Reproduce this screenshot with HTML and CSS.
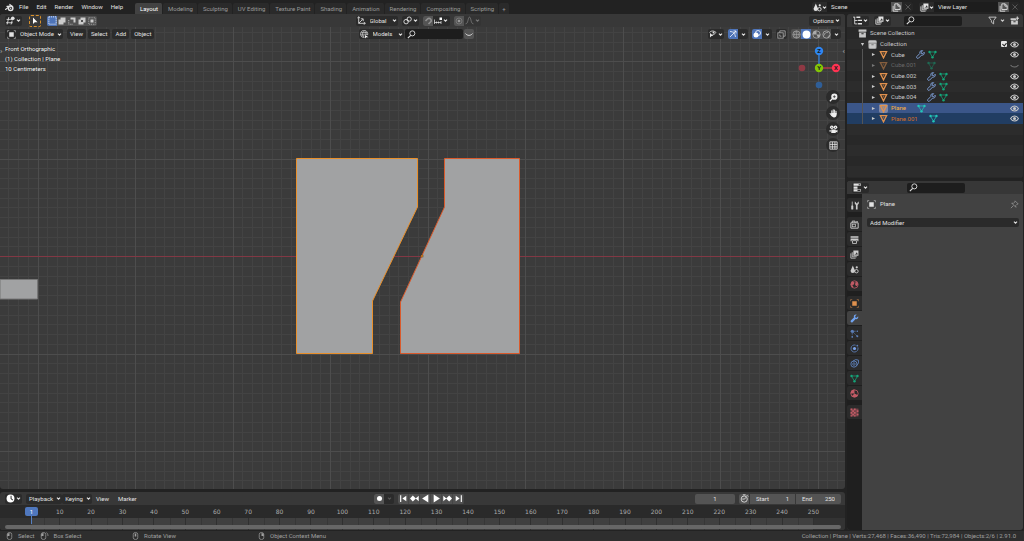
FILE: index.html
```html
<!DOCTYPE html>
<html lang="en">
<head>
<meta charset="utf-8">
<title>Blender</title>
<link rel="stylesheet" href="styles.css">
</head>
<body>
<svg class="sprite" aria-hidden="true">
  <symbol id="chev" viewBox="0 0 8 8"><path d="M1.500 2.500 4 5 6.500 2.500" fill="none" stroke="currentColor" stroke-width="1.700"/></symbol>
  <symbol id="blender" viewBox="0 0 16 16"><path d="M1 11.500 8 6H3.500M8.500 2.500l5 4" fill="none" stroke="currentColor" stroke-width="2" stroke-linecap="round"/><circle cx="10" cy="9.500" r="4" fill="none" stroke="currentColor" stroke-width="2.600"/><circle cx="10" cy="9.500" r="1.300" fill="currentColor"/></symbol>
  <symbol id="search" viewBox="0 0 16 16"><circle cx="9.500" cy="6" r="4.500" fill="none" stroke="currentColor" stroke-width="1.600"/><path d="M6.500 9.500 1.500 14.500" stroke="currentColor" stroke-width="2"/></symbol>
  <symbol id="view3d" viewBox="0 0 16 16"><path d="M1 6h11M0 12h12M5 2 2 15M11 8 9 15" fill="none" stroke="currentColor" stroke-width="1.500"/><circle cx="12" cy="4" r="3.300" fill="currentColor"/></symbol>
  <symbol id="arrow" viewBox="0 0 16 16"><path d="M4 1v13l3.500-3.500H13z" fill="currentColor"/></symbol>
  <symbol id="selset" viewBox="0 0 16 16"><rect x="1.500" y="1.500" width="13" height="13" fill="none" stroke="currentColor" stroke-width="1.500" stroke-dasharray="2 1.600"/></symbol>
  <symbol id="selext" viewBox="0 0 16 16"><path d="M5 1h10v10h-4v4H1V5h4z" fill="currentColor"/></symbol>
  <symbol id="selsub" viewBox="0 0 16 16"><path d="M5 1h10v10h-4V5H5z" fill="currentColor"/><path d="M1.500 6v8.500H10" fill="none" stroke="currentColor" stroke-width="1.500" stroke-dasharray="2 1.500"/></symbol>
  <symbol id="seldif" viewBox="0 0 16 16"><path d="M5 1h10v10h-4v4H1V5h4zM6 6v4h4V6z" fill="currentColor" fill-rule="evenodd"/></symbol>
  <symbol id="selint" viewBox="0 0 16 16"><rect x="1.500" y="1.500" width="13" height="13" fill="none" stroke="currentColor" stroke-width="1.300" stroke-dasharray="2 1.600"/><rect x="5" y="5" width="6" height="6" fill="currentColor"/></symbol>
  <symbol id="object" viewBox="0 0 16 16"><rect x="4" y="4" width="8" height="8" fill="currentColor"/><path d="M1 4V1h3M12 1h3v3M15 12v3h-3M4 15H1v-3" fill="none" stroke="currentColor" stroke-width="1.200" opacity=".7"/></symbol>
  <symbol id="axes" viewBox="0 0 16 16"><path d="M3 2v11h11M3 13l7-7M1 4l2-3 2 3M12 11l3 2-3 2M7 5h4v4" fill="none" stroke="currentColor" stroke-width="1.500"/></symbol>
  <symbol id="pivot" viewBox="0 0 16 16"><circle cx="5.500" cy="10" r="4" fill="none" stroke="currentColor" stroke-width="1.600"/><circle cx="11" cy="5.500" r="3.800" fill="none" stroke="currentColor" stroke-width="1.600"/><circle cx="8" cy="8" r="1.500" fill="currentColor"/></symbol>
  <symbol id="magnet" viewBox="0 0 16 16"><path d="M3 8 7 4a4 4 0 0 1 6 6l-4 4" fill="none" stroke="currentColor" stroke-width="3.200"/></symbol>
  <symbol id="snap" viewBox="0 0 16 16"><path d="M1 5v9M1 11h13M5 9v4M9 9v4M14 8v6" fill="none" stroke="currentColor" stroke-width="1.500"/><rect x="11" y="1" width="5" height="5" fill="#fff"/></symbol>
  <symbol id="prop" viewBox="0 0 16 16"><circle cx="8" cy="8" r="6" fill="none" stroke="currentColor" stroke-width="1"/><circle cx="8" cy="8" r="2.600" fill="currentColor"/></symbol>
  <symbol id="falloff" viewBox="0 0 16 16"><path d="M1 14c5 0 4-12 7-12s2 12 7 12" fill="none" stroke="currentColor" stroke-width="1.600"/></symbol>
  <symbol id="globe" viewBox="0 0 16 16"><path d="M13.500 9A6.500 6.500 0 1 0 8 13.500M1 7.500h13M7.500 1c-4 4-4 8 0 12M7.500 1c3 3 4 5 3 8M2 4.500h11M2 10.500h6" fill="none" stroke="currentColor" stroke-width="1.100"/><path d="M9 9v6l2-2h4z" fill="#fff"/></symbol>
  <symbol id="eyecur" viewBox="0 0 16 16"><path d="M1 5c3-4 9-4 13 0-3 4-5 4-7 4" fill="none" stroke="currentColor" stroke-width="1.700"/><circle cx="9" cy="5" r="2" fill="currentColor"/><path d="M2 6v9l3-3h4z" fill="currentColor"/></symbol>
  <symbol id="gizmo" viewBox="0 0 16 16"><path d="M2 3c7 0 10 4 11 11M2 14 14 2M9 2h5v5" fill="none" stroke="currentColor" stroke-width="1.500"/></symbol>
  <symbol id="overlay" viewBox="0 0 16 16"><circle cx="10" cy="6" r="5" fill="none" stroke="currentColor" stroke-width="1.600"/><circle cx="6" cy="10" r="5" fill="currentColor"/></symbol>
  <symbol id="xray" viewBox="0 0 16 16"><rect x="1.500" y="5" width="9.500" height="9.500" fill="none" stroke="currentColor" stroke-width="1.500"/><path d="M5 5V1.500h9.500V11H11M5 8v3h3" fill="none" stroke="currentColor" stroke-width="1.500"/></symbol>
  <symbol id="wire" viewBox="0 0 16 16"><circle cx="8" cy="8" r="6.500" fill="none" stroke="currentColor" stroke-width="1.300"/><path d="M1.500 8h13M8 1.500v13M8 1.500c-4.500 4-4.500 9 0 13M8 1.500c4.500 4 4.500 9 0 13" fill="none" stroke="currentColor"/></symbol>
  <symbol id="solid" viewBox="0 0 16 16"><circle cx="8" cy="8" r="7" fill="currentColor"/></symbol>
  <symbol id="matprev" viewBox="0 0 16 16"><circle cx="8" cy="8" r="6.500" fill="none" stroke="currentColor" stroke-width="1.400"/><path d="M8 1v7H1a7 7 0 0 1 7-7zM8 8h7a7 7 0 0 1-4 6z" fill="currentColor"/></symbol>
  <symbol id="rendered" viewBox="0 0 16 16"><circle cx="8" cy="8" r="6.500" fill="none" stroke="currentColor" stroke-width="1.500"/><path d="M3 10c2-5 4-6 8-6M11 14c0-3 1-4 3-5" fill="none" stroke="currentColor" stroke-width="1.600"/></symbol>
  <symbol id="scene" viewBox="0 0 16 16"><path d="M5 1 9 10A4 4 0 1 1 1 10z" fill="currentColor"/><circle cx="11.500" cy="11" r="3" fill="none" stroke="currentColor" stroke-width="1.600"/><circle cx="12" cy="4" r="2" fill="currentColor"/></symbol>
  <symbol id="layers" viewBox="0 0 16 16"><path d="M1.500 6v8.500H10M4 4v8h8" fill="none" stroke="currentColor" stroke-width="1.500"/><path d="M6 1h9v9H6zm1.500 7H14l-2-4-1.500 2.500z" fill="currentColor" fill-rule="evenodd"/></symbol>
  <symbol id="copy" viewBox="0 0 16 16"><path d="M2 5v9.500h9M5 1.500h6l3.500 3.500v6.500H5zM10.500 1.500v4h4" fill="none" stroke="currentColor" stroke-width="1.600"/></symbol>
  <symbol id="close" viewBox="0 0 16 16"><path d="m3 3 10 10M13 3 3 13" stroke="currentColor" stroke-width="1.500"/></symbol>
  <symbol id="tree" viewBox="0 0 16 16"><path d="M0 2h4M3 2v12h5M3 8h5" fill="none" stroke="currentColor" stroke-width="1.500"/><path d="M6 1h7v2.500H6zM9 6.500h7V9H9zM9 12.500h7V15H9z" fill="currentColor"/></symbol>
  <symbol id="filter" viewBox="0 0 16 16"><path d="M1.500 2h13L10 8v6l-4-3V8z" fill="none" stroke="currentColor" stroke-width="1.600"/></symbol>
  <symbol id="coll" viewBox="0 0 16 16"><path d="M1 1h14v4H1zM2 6h12v9H2zm4 1.500V9.500h4v-2z" fill="currentColor" fill-rule="evenodd"/></symbol>
  <symbol id="newcoll" viewBox="0 0 16 16"><path d="M1 4h10v3H1zM2 8h12v7H2zm4 1.500V11h4V9.500zM12 1h2v2h2v2h-2v2h-2V5h-2V3h2z" fill="currentColor" fill-rule="evenodd"/></symbol>
  <symbol id="mesh" viewBox="0 0 16 16"><path d="M2.500 3h11L8 14z" fill="none" stroke="currentColor" stroke-width="2.400"/><path d="M6 5h4l-2 4z" fill="currentColor" opacity=".55"/></symbol>
  <symbol id="meshdata" viewBox="0 0 16 16"><path d="M2.500 3.500h11L8 13z" fill="none" stroke="currentColor" stroke-width="1.300"/><circle cx="2.700" cy="3.500" r="2.100" fill="currentColor"/><circle cx="13.300" cy="3.500" r="2.100" fill="currentColor"/><circle cx="8" cy="13" r="2.100" fill="currentColor"/></symbol>
  <symbol id="wrench" viewBox="0 0 16 16"><path d="M14.500 4 12 6.500 9.500 6 9.300 3.700 11.800 1.200C8 .500 6 3 7 6L1.500 11.500c-1.500 2 1 4.500 3 3L10 9c3 .8 5.500-1.500 4.500-5z" fill="none" stroke="currentColor" stroke-width="1.700"/></symbol>
  <symbol id="wrenchfill" viewBox="0 0 16 16"><path d="M14.500 4 12 6.500 9.500 6 9.300 3.700 11.800 1.200C8 .500 6 3 7 6L1.500 11.500c-1.500 2 1 4.500 3 3L10 9c3 .8 5.500-1.500 4.500-5z" fill="currentColor"/></symbol>
  <symbol id="eye" viewBox="0 0 16 16"><path d="M1 8c3.500-6 10.500-6 14 0-3.500 6-10.500 6-14 0z" fill="none" stroke="currentColor" stroke-width="1.800"/><circle cx="8" cy="8" r="2.700" fill="currentColor"/></symbol>
  <symbol id="eyeshut" viewBox="0 0 16 16"><path d="M1 7c3.500 5 10.500 5 14 0" fill="none" stroke="currentColor" stroke-width="1.800"/></symbol>
  <symbol id="tri" viewBox="0 0 16 16"><path d="m3 3 10 5-10 5z" fill="currentColor"/></symbol>
  <symbol id="tridown" viewBox="0 0 16 16"><path d="m3 3 5 10 5-10z" fill="currentColor"/></symbol>
  <symbol id="props" viewBox="0 0 16 16"><path d="M1 1h13v4H1zM1 6h7v4H1zM1 11h13v4H1zM10 2v2h3V2zM8 12v2h5v-2z" fill="currentColor" fill-rule="evenodd"/></symbol>
  <symbol id="pin" viewBox="0 0 16 16"><path d="m9 1.500 5.500 5.500-2 .5-2.500 2.500.500 3L3 5.500l3 .5 2.500-2.500zM6 10l-4.500 4.500" fill="none" stroke="currentColor" stroke-width="1.300"/></symbol>
  <symbol id="tool" viewBox="0 0 16 16"><path d="M4 1v8" stroke="currentColor" stroke-width="1.400"/><rect x="2.200" y="8" width="3.600" height="7" rx="1" fill="currentColor"/><path d="M8.500 1v4l2 2v8h3V7l2-2V1l-2 1v2h-3V2z" fill="currentColor"/></symbol>
  <symbol id="render" viewBox="0 0 16 16"><path d="M1.500 5h13v9.500h-13zM4 5V2h5v3" fill="none" stroke="currentColor" stroke-width="1.700"/><rect x="4" y="7.500" width="6" height="4.500" fill="none" stroke="currentColor" stroke-width="1.300"/><path d="M11 2h3v2h-3z" fill="currentColor"/></symbol>
  <symbol id="output" viewBox="0 0 16 16"><path d="M1 2h14v3H1zM1 6h14v5h-2V9H3v2H1z" fill="currentColor"/><path d="M4.500 10h7v5h-7z" fill="none" stroke="currentColor" stroke-width="1.500"/></symbol>
  <symbol id="world" viewBox="0 0 16 16"><circle cx="8" cy="8" r="6.500" fill="none" stroke="currentColor" stroke-width="1.400"/><path d="M3 3l5 1-1 4-3 1 2 3-2 1-3-5zM10 3l4 2v4l-3 2-2-3z" fill="currentColor"/></symbol>
  <symbol id="particles" viewBox="0 0 16 16"><path d="M4 4v10M4 4h10M4 4l9 9" stroke="currentColor" stroke-width="1.200" stroke-dasharray="6 2"/><circle cx="4" cy="4" r="2.800" fill="currentColor"/><circle cx="13" cy="4" r="1.200" fill="currentColor"/><circle cx="4" cy="14" r="1.500" fill="currentColor"/><circle cx="13" cy="13" r="1.800" fill="currentColor"/></symbol>
  <symbol id="physics" viewBox="0 0 16 16"><path d="M10 2a6.300 6.300 0 1 0 4 4" fill="none" stroke="currentColor" stroke-width="1.500"/><circle cx="8" cy="8" r="2.800" fill="#7aa4ea"/><circle cx="13" cy="3" r="1.600" fill="currentColor"/></symbol>
  <symbol id="constraint" viewBox="0 0 16 16"><circle cx="7" cy="9" r="5.500" fill="none" stroke="currentColor" stroke-width="1.700"/><circle cx="7" cy="9" r="2.200" fill="none" stroke="currentColor" stroke-width="1.500"/><path d="m5 4 5-3 5 1v5l-3 5" fill="none" stroke="currentColor" stroke-width="1.700"/></symbol>
  <symbol id="material" viewBox="0 0 16 16"><circle cx="8" cy="8" r="6.500" fill="none" stroke="currentColor" stroke-width="1.500"/><path d="M8 1v7l6 3A7 7 0 0 1 3 13l5-5H1a7 7 0 0 1 7-7z" fill="currentColor"/></symbol>
  <symbol id="texture" viewBox="0 0 16 16"><rect x="1" y="1" width="14" height="14" fill="currentColor" opacity=".5"/><path d="M1 1h3v3H1zM7 1h3v3H7zM12 4h3v3h-3zM4 4h3v3H4zM1 7h3v3H1zM7 7h3v3H7zM4 10h3v3H4zM12 10h3v3h-3zM1 13h3v2H1zM7 13h3v2H7z" fill="currentColor"/></symbol>
  <symbol id="clock" viewBox="0 0 16 16"><circle cx="8" cy="8" r="7" fill="#fff"/><path d="M9 3v5l3 3" fill="none" stroke="#333" stroke-width="1.800"/></symbol>
  <symbol id="stopwatch" viewBox="0 0 16 16"><circle cx="7.500" cy="9" r="5.500" fill="none" stroke="currentColor" stroke-width="1.500"/><path d="M7.500 9 11 6M5 1.500h5M12 2l2.500 2.500M7.500 9H4" fill="none" stroke="currentColor" stroke-width="1.600"/></symbol>
  <symbol id="rec" viewBox="0 0 16 16"><circle cx="8" cy="8" r="4.500" fill="currentColor"/></symbol>
  <symbol id="first" viewBox="0 0 16 16"><path d="M3 2v12" stroke="currentColor" stroke-width="2"/><path d="M13 3v10L6 8z" fill="currentColor"/></symbol>
  <symbol id="prevkey" viewBox="0 0 16 16"><path d="m5 2.500 5.500 5.500L5 13.500 0 8zM15.500 3v10L10 8z" fill="currentColor"/></symbol>
  <symbol id="playback" viewBox="0 0 16 16"><path d="M13 1v14L2 8z" fill="currentColor"/></symbol>
  <symbol id="mouseL" viewBox="0 0 12 16"><rect x="1.500" y="1" width="9" height="14" rx="4" fill="none" stroke="currentColor" stroke-width="1.400"/><path d="M1.500 8V4.500L6 1v7z" fill="currentColor"/></symbol>
  <symbol id="mouseDrag" viewBox="0 0 16 16"><rect x="1.500" y="1" width="9" height="14" rx="4" fill="none" stroke="currentColor" stroke-width="1.400"/><path d="M1.500 8V4.500L6 1v7z" fill="currentColor"/><path d="M12 1c2 2 3 4 3 7" fill="none" stroke="currentColor" stroke-width="1.400"/></symbol>
  <symbol id="mouseM" viewBox="0 0 12 16"><rect x="1.500" y="1" width="9" height="14" rx="4" fill="none" stroke="currentColor" stroke-width="1.400"/><rect x="4.500" y="3" width="3" height="6" fill="currentColor"/></symbol>
  <symbol id="zoomin" viewBox="0 0 16 16"><circle cx="9.500" cy="6.500" r="5.500" fill="currentColor"/><path d="M6 10 1.500 14.500" stroke="currentColor" stroke-width="2.400"/><path d="M9.500 4v5M7 6.500h5" stroke="#333" stroke-width="1.300"/></symbol>
  <symbol id="hand" viewBox="0 0 16 16"><path d="M5 9V3M7.500 8V1.500M10 8V2M12.500 9V4M2 8l3 4" fill="none" stroke="currentColor" stroke-width="1.800" stroke-linecap="round"/><path d="M4 7h9.500v3c0 3-2 5-4.500 5s-4-2-5-4z" fill="currentColor"/></symbol>
  <symbol id="camera" viewBox="0 0 16 16"><circle cx="5" cy="4" r="3.200" fill="currentColor"/><circle cx="11.500" cy="4" r="3.200" fill="currentColor"/><path d="M4 8h8v6H4zM12 10l3-1.500v5L12 12zM1 9h2v3H1z" fill="currentColor"/><circle cx="5" cy="4" r="1" fill="#333"/><circle cx="11.500" cy="4" r="1" fill="#333"/></symbol>
  <symbol id="ortho" viewBox="0 0 16 16"><path d="M1.500 1.500h13v13h-13zM1.500 6h13M1.500 10.500h13M6 1.500v13M10.500 1.500v13" fill="none" stroke="currentColor" stroke-width="1.400"/></symbol>
</svg>

<div class="app">
  <header class="topbar">
    <svg class="ic logo"><use href="#blender"/></svg>
    <nav class="menus">
      <button>File</button><button>Edit</button><button>Render</button><button>Window</button><button>Help</button>
    </nav>
    <nav class="tabs">
      <button class="on">Layout</button><button>Modeling</button><button>Sculpting</button><button>UV Editing</button><button>Texture Paint</button><button>Shading</button><button>Animation</button><button>Rendering</button><button>Compositing</button><button>Scripting</button><button class="plus" aria-label="Add workspace">+</button>
    </nav>
    <div class="ids">
      <div class="id"><button class="pick" aria-label="Browse scene"><svg class="ic"><use href="#scene"/></svg><svg class="ch"><use href="#chev"/></svg></button><input aria-label="Scene" value="Scene"><button class="lit" aria-label="New scene"><svg class="ic"><use href="#copy"/></svg></button><button class="dim" aria-label="Delete scene"><svg class="ic sm"><use href="#close"/></svg></button></div>
      <div class="id"><button class="pick" aria-label="Browse view layer"><svg class="ic"><use href="#layers"/></svg><svg class="ch"><use href="#chev"/></svg></button><input aria-label="View layer" value="View Layer"><button class="lit" aria-label="New view layer"><svg class="ic"><use href="#copy"/></svg></button><button class="dim" aria-label="Delete view layer"><svg class="ic sm"><use href="#close"/></svg></button></div>
    </div>
  </header>

  <main class="work">
    <section class="left">
      <div class="view">
        <svg class="scene" viewBox="0 0 845 475" preserveAspectRatio="xMidYMid slice" role="img" aria-label="3D viewport">
          <g id="grid" shape-rendering="crispEdges"></g>
          <path d="M0 242.500H845" stroke="#823844"/>
          <path d="M0 265.500H37.500V285H0z" fill="#a1a2a3" stroke="#777"/>
          <path d="M296.500 144.500H417.500V193L372.500 287V339.500H296.500z" fill="#a1a2a3" stroke="#e98f2a" stroke-linejoin="round"/>
          <path d="M444.500 144.500H519.500V339.500H400.500V288L444.500 193z" fill="#a1a2a3" stroke="#d95a2c" stroke-linejoin="round"/>
          <rect x="421" y="241" width="2" height="2" fill="#ff9a1f" stroke="#5a3a1a" stroke-width=".5"/>
        </svg>

        <div class="bar one">
          <div class="grp">
            <button class="box" aria-label="Editor type"><svg class="ic"><use href="#view3d"/></svg><svg class="ch"><use href="#chev"/></svg></button>
            <button class="active-tool" aria-label="Select box"><svg class="ic sm"><use href="#arrow"/></svg></button>
            <div class="seg modes"><button class="blue" aria-label="Set"><svg class="ic"><use href="#selset"/></svg></button><button aria-label="Extend"><svg class="ic sm"><use href="#selext"/></svg></button><button aria-label="Subtract"><svg class="ic sm"><use href="#selsub"/></svg></button><button aria-label="Difference"><svg class="ic sm"><use href="#seldif"/></svg></button><button aria-label="Intersect"><svg class="ic sm"><use href="#selint"/></svg></button></div>
          </div>
          <div class="grp mid">
            <label class="box drop orient"><svg class="ic"><use href="#axes"/></svg><select aria-label="Orientation"><option>Global</option></select><svg class="ch"><use href="#chev"/></svg></label>
            <button class="box" aria-label="Pivot"><svg class="ic"><use href="#pivot"/></svg><svg class="ch"><use href="#chev"/></svg></button>
            <div class="seg dark"><button class="lit muted" aria-label="Snap"><svg class="ic sm"><use href="#magnet"/></svg></button><button class="wide" aria-label="Snap to"><svg class="ic sm"><use href="#snap"/></svg><svg class="ch"><use href="#chev"/></svg></button></div>
            <div class="seg faint"><button class="lit" aria-label="Proportional editing"><svg class="ic sm"><use href="#prop"/></svg></button><button class="wide" aria-label="Falloff"><svg class="ic"><use href="#falloff"/></svg><svg class="ch"><use href="#chev"/></svg></button></div>
          </div>
          <div class="grp end"><button class="box opts">Options<svg class="ch"><use href="#chev"/></svg></button></div>
        </div>

        <div class="bar two">
          <div class="grp tight">
            <label class="box drop mode"><svg class="ic"><use href="#object"/></svg><select aria-label="Mode"><option>Object Mode</option></select><svg class="ch"><use href="#chev"/></svg></label>
            <button class="box txt">View</button><button class="box txt">Select</button><button class="box txt">Add</button><button class="box txt">Object</button>
          </div>
          <div class="grp mid models">
            <label class="box drop kit"><svg class="ic"><use href="#globe"/></svg><select aria-label="Asset type"><option>Models</option></select><svg class="ch"><use href="#chev"/></svg></label>
            <label class="search"><svg class="ic"><use href="#search"/></svg><input type="search" aria-label="Search assets"></label>
            <button class="lit shut" aria-label="Hide"><svg class="ic sm"><use href="#eyeshut"/></svg></button>
          </div>
          <div class="grp end shade">
            <button class="box" aria-label="Visibility"><svg class="ic sm"><use href="#eyecur"/></svg><svg class="ch"><use href="#chev"/></svg></button>
            <div class="seg dark"><button class="blue" aria-label="Gizmos"><svg class="ic sm"><use href="#gizmo"/></svg></button><button aria-label="Gizmo options"><svg class="ch"><use href="#chev"/></svg></button></div>
            <div class="seg dark"><button class="blue" aria-label="Overlays"><svg class="ic sm"><use href="#overlay"/></svg></button><button aria-label="Overlay options"><svg class="ch"><use href="#chev"/></svg></button></div>
            <button class="box grey" aria-label="X-ray"><svg class="ic"><use href="#xray"/></svg></button>
            <div class="seg shades"><button aria-label="Wireframe"><svg class="ic"><use href="#wire"/></svg></button><button class="blue" aria-label="Solid"><svg class="ic"><use href="#solid"/></svg></button><button aria-label="Material preview"><svg class="ic"><use href="#matprev"/></svg></button><button aria-label="Rendered"><svg class="ic"><use href="#rendered"/></svg></button><button class="deep" aria-label="Shading options"><svg class="ch"><use href="#chev"/></svg></button></div>
          </div>
        </div>

        <div class="info"><p>Front Orthographic</p><p>(1) Collection | Plane</p><p>10 Centimeters</p></div>

        <svg class="gizmo" viewBox="0 0 44 44">
          <path d="M22 8V22" stroke="#2e86ec" stroke-width="1.200"/><path d="M22 22H36" stroke="#f0354f" stroke-width="1.200"/>
          <circle cx="5" cy="22" r="3.300" fill="#8f3944"/><circle cx="22" cy="39" r="3.300" fill="#2f5e97"/>
          <circle cx="22" cy="5" r="4.200" fill="#2e86f0"/><circle cx="22" cy="22" r="4.200" fill="#83c606"/><circle cx="39" cy="22" r="4.200" fill="#ff3352"/>
          <text x="22" y="7">Z</text><text x="22" y="24">Y</text><text x="39" y="24">X</text>
        </svg>
        <div class="navs">
          <button aria-label="Zoom"><svg class="ic"><use href="#zoomin"/></svg></button><button aria-label="Pan"><svg class="ic"><use href="#hand"/></svg></button><button aria-label="Camera"><svg class="ic"><use href="#camera"/></svg></button><button aria-label="Orthographic"><svg class="ic"><use href="#ortho"/></svg></button>
        </div>
        <span class="edge l">›</span><span class="edge r">‹</span>
      </div>

      <section class="timeline">
        <div class="bar tl">
          <div class="grp">
            <button class="box" aria-label="Editor type"><svg class="ic"><use href="#clock"/></svg><svg class="ch"><use href="#chev"/></svg></button>
            <div class="pair"><button class="box pop">Playback<svg class="ch"><use href="#chev"/></svg></button><button class="box pop">Keying<svg class="ch"><use href="#chev"/></svg></button></div>
            <div class="plains"><button>View</button><button>Marker</button></div>
          </div>
          <div class="grp mid play">
            <div class="seg dark off"><button class="lit" aria-label="Auto keying"><svg class="ic"><use href="#rec"/></svg></button><button aria-label="Keying options"><svg class="ch"><use href="#chev"/></svg></button></div>
            <div class="seg trans"><button aria-label="Jump to start"><svg class="ic"><use href="#first"/></svg></button><button aria-label="Previous keyframe"><svg class="ic"><use href="#prevkey"/></svg></button><button aria-label="Play reverse"><svg class="ic"><use href="#playback"/></svg></button><button aria-label="Play"><svg class="ic flip"><use href="#playback"/></svg></button><button aria-label="Next keyframe"><svg class="ic flip"><use href="#prevkey"/></svg></button><button aria-label="Jump to end"><svg class="ic flip"><use href="#first"/></svg></button></div>
          </div>
          <div class="grp end nums">
            <input class="num cur" aria-label="Current frame" value="1">
            <div class="range"><button aria-label="Preview range"><svg class="ic"><use href="#stopwatch"/></svg></button><label class="num">Start<input value="1"></label><label class="num">End<input value="250"></label></div>
          </div>
        </div>
        <div class="ruler">
          <ol class="frames">
            <li>10</li><li>20</li><li>30</li><li>40</li><li>50</li><li>60</li><li>70</li><li>80</li><li>90</li><li>100</li><li>110</li><li>120</li><li>130</li><li>140</li><li>150</li><li>160</li><li>170</li><li>180</li><li>190</li><li>200</li><li>210</li><li>220</li><li>230</li><li>240</li><li>250</li>
          </ol>
          <span class="playhead">1</span>
          <div class="scroll"></div>
        </div>
      </section>
    </section>

    <aside class="right">
      <section class="outliner">
        <div class="bar side">
          <button class="box" aria-label="Editor type"><svg class="ic"><use href="#tree"/></svg><svg class="ch"><use href="#chev"/></svg></button>
          <button class="box" aria-label="Display mode"><svg class="ic"><use href="#layers"/></svg><svg class="ch"><use href="#chev"/></svg></button>
          <label class="search"><svg class="ic"><use href="#search"/></svg><input type="search" aria-label="Filter outliner"></label>
          <button class="plain" aria-label="Filter"><svg class="ic"><use href="#filter"/></svg><svg class="ch"><use href="#chev"/></svg></button>
          <button class="plain" aria-label="New collection"><svg class="ic"><use href="#newcoll"/></svg></button>
        </div>
        <ul class="rows">
          <li class="root"><svg class="ic"><use href="#coll"/></svg>Scene Collection</li>
          <li class="c1"><svg class="tw"><use href="#tridown"/></svg><svg class="ic halo"><use href="#coll"/></svg>Collection<span class="sp"></span><input type="checkbox" checked aria-label="Include collection"><svg class="ic eye"><use href="#eye"/></svg></li>
          <li class="c2"><svg class="tw"><use href="#tri"/></svg><svg class="ic or"><use href="#mesh"/></svg><span class="nm">Cube</span><svg class="ic wr"><use href="#wrench"/></svg><svg class="ic gr"><use href="#meshdata"/></svg><span class="sp"></span><svg class="ic eye"><use href="#eye"/></svg></li>
          <li class="c2 hid"><svg class="tw"><use href="#tri"/></svg><svg class="ic or"><use href="#mesh"/></svg><span class="nm">Cube.001</span><svg class="ic gr"><use href="#meshdata"/></svg><span class="sp"></span><svg class="ic eye"><use href="#eyeshut"/></svg></li>
          <li class="c2"><svg class="tw"><use href="#tri"/></svg><svg class="ic or"><use href="#mesh"/></svg><span class="nm">Cube.002</span><svg class="ic wr"><use href="#wrench"/></svg><svg class="ic gr"><use href="#meshdata"/></svg><span class="sp"></span><svg class="ic eye"><use href="#eye"/></svg></li>
          <li class="c2"><svg class="tw"><use href="#tri"/></svg><svg class="ic or"><use href="#mesh"/></svg><span class="nm">Cube.003</span><svg class="ic wr"><use href="#wrench"/></svg><svg class="ic gr"><use href="#meshdata"/></svg><span class="sp"></span><svg class="ic eye"><use href="#eye"/></svg></li>
          <li class="c2"><svg class="tw"><use href="#tri"/></svg><svg class="ic or"><use href="#mesh"/></svg><span class="nm">Cube.004</span><svg class="ic wr"><use href="#wrench"/></svg><svg class="ic gr"><use href="#meshdata"/></svg><span class="sp"></span><svg class="ic eye"><use href="#eye"/></svg></li>
          <li class="c2 act"><svg class="tw"><use href="#tri"/></svg><svg class="ic or halo"><use href="#mesh"/></svg><span class="nm">Plane</span><svg class="ic gr"><use href="#meshdata"/></svg><span class="sp"></span><svg class="ic eye"><use href="#eye"/></svg></li>
          <li class="c2 sel"><svg class="tw"><use href="#tri"/></svg><svg class="ic or"><use href="#mesh"/></svg><span class="nm">Plane.001</span><svg class="ic gr"><use href="#meshdata"/></svg><span class="sp"></span><svg class="ic eye"><use href="#eye"/></svg></li>
        </ul>
        <div class="empty"></div>
      </section>

      <section class="props">
        <div class="bar side">
          <button class="box" aria-label="Editor type"><svg class="ic"><use href="#props"/></svg><svg class="ch"><use href="#chev"/></svg></button>
          <label class="search far"><svg class="ic"><use href="#search"/></svg><input type="search" aria-label="Search properties"></label>
        </div>
        <div class="body">
          <nav class="ptabs">
            <button aria-label="Tool"><svg class="ic"><use href="#tool"/></svg></button>
            <button class="gap" aria-label="Render"><svg class="ic"><use href="#render"/></svg></button>
            <button aria-label="Output"><svg class="ic"><use href="#output"/></svg></button>
            <button aria-label="View layer"><svg class="ic"><use href="#layers"/></svg></button>
            <button aria-label="Scene"><svg class="ic"><use href="#scene"/></svg></button>
            <button class="red" aria-label="World"><svg class="ic"><use href="#world"/></svg></button>
            <button class="gap or" aria-label="Object"><svg class="ic"><use href="#object"/></svg></button>
            <button class="on" aria-label="Modifiers"><svg class="ic"><use href="#wrenchfill"/></svg></button>
            <button class="blu" aria-label="Particles"><svg class="ic"><use href="#particles"/></svg></button>
            <button class="blu" aria-label="Physics"><svg class="ic"><use href="#physics"/></svg></button>
            <button class="blu" aria-label="Constraints"><svg class="ic"><use href="#constraint"/></svg></button>
            <button class="gr" aria-label="Object data"><svg class="ic"><use href="#meshdata"/></svg></button>
            <button class="red" aria-label="Material"><svg class="ic"><use href="#material"/></svg></button>
            <button class="gap red" aria-label="Texture"><svg class="ic"><use href="#texture"/></svg></button>
          </nav>
          <div class="panel">
            <div class="crumb"><svg class="ic"><use href="#object"/></svg><span>Plane</span><button aria-label="Pin"><svg class="ic"><use href="#pin"/></svg></button></div>
            <label class="add"><select aria-label="Add modifier"><option>Add Modifier</option></select><svg class="ch"><use href="#chev"/></svg></label>
          </div>
        </div>
      </section>
    </aside>
  </main>

  <footer class="status">
    <div class="hint"><svg class="ms"><use href="#mouseL"/></svg><span>Select</span><svg class="ms drag"><use href="#mouseDrag"/></svg><span>Box Select</span></div>
    <div class="hint"><svg class="ms"><use href="#mouseM"/></svg><span>Rotate View</span></div>
    <div class="hint"><svg class="ms flip"><use href="#mouseL"/></svg><span>Object Context Menu</span></div>
    <p>Collection | Plane | Verts:27,468 | Faces:36,490 | Tris:72,984 | Objects:2/6 | 2.91.0</p>
  </footer>
</div>
<script src="grid.js"></script>
</body>
</html>
```
FILE: styles.css
```css
* { box-sizing: border-box; margin: 0; padding: 0; }
html, body { height: 100%; }
body { background: #222; color: #e2e2e2; font: 6px/8px Roboto, "Noto Sans", sans-serif; overflow: hidden; }
button, input, select { font: inherit; color: inherit; background: none; border: 0; appearance: none; outline: 0; }
button, label { display: flex; align-items: center; }
input { min-width: 0; }
ul, ol { list-style: none; }
.sprite { position: absolute; width: 0; height: 0; }
.ic { width: 9px; height: 9px; flex: none; }
.ic.sm { width: 8px; height: 8px; }
.ch { width: 5px; height: 5px; flex: none; }
.flip { transform: scaleX(-1); }

.app { display: flex; flex-direction: column; height: 100vh; }
.topbar { display: flex; align-items: center; height: 14px; padding: 0 4px 0 5px; background: #222; flex: none; }
.menus { display: flex; gap: 8px; margin-left: 5px; padding-right: 12px; }
.tabs { display: flex; align-self: flex-end; }
.tabs button { height: 11px; padding: 0 4px 0 5px; border-right: 1px solid #222; background: #2a2a2a; color: #9a9a9a; border-radius: 2px 2px 0 0; }
.tabs .on { background: #424242; color: #fff; }
.tabs .plus { padding: 0 3px; }
.ids { display: flex; gap: 6px; margin-left: auto; }
.id { display: flex; height: 10px; border-radius: 2px; background: #1d1d1d; overflow: hidden; }
.id input { width: 64px; padding: 0 4px; }
.id button { width: 11px; justify-content: center; }
.id .pick { width: 15px; background: #2b2b2b; }
.id .dim { background: #262626; color: #666; }
.lit { background: #545454; }

.work { display: flex; flex: 1; gap: 2px; min-height: 0; }
.left { display: flex; flex-direction: column; flex: 1; gap: 3px; min-width: 0; }
.view { position: relative; flex: 1; min-height: 0; background: #3b3b3b; border-radius: 3px; overflow: hidden; }
.scene { position: absolute; inset: 0; width: 100%; height: 100%; }
.bar { display: grid; grid-template-columns: 1fr auto 1fr; align-items: center; position: relative; height: 14px; padding: 0 4px 0 5px; }
.bar.one { background: #383838; height: 13px; }
.grp { display: flex; align-items: center; gap: 4px; }
.grp.tight { gap: 2px; }
.grp.end { justify-content: flex-end; }
.box { height: 10px; padding: 0 1px; gap: 1px; background: #2b2b2b; border-radius: 2px; }
.txt { padding: 0 3px; }
.active-tool { width: 12px; height: 12px; justify-content: center; border: 1px dashed #d9902a; border-radius: 2px; margin: 0 2px 0 3px; color: #fff; }
.seg { display: flex; height: 10px; border-radius: 2px; overflow: hidden; background: #515151; }
.seg button { width: 10px; justify-content: center; }
.seg .wide { width: 17px; gap: 1px; }
.seg.dark { background: #2b2b2b; }
.seg .blue { background: #4e74b8; color: #fff; }
.seg .muted { color: #909090; }
.seg.faint { background: #343434; color: #999; }
.seg.faint .wide { color: #777; }
.modes { color: #ccc; }
.orient { width: 42px; }
.drop select { flex: 1; padding-left: 3px; }
.mid { padding-right: 10px; }
.opts { width: 32px; padding: 0 2px 0 4px; justify-content: space-between; }
.mode { width: 58px; margin-right: 2px; }
.mode .ic { margin-left: 1px; }
.models { gap: 1px; padding-right: 14px; }
.kit { width: 45px; }
.search { height: 10px; width: 58px; padding: 0 2px; background: #1d1d1d; border-radius: 2px; }
.search input { flex: 1; }
.shut { width: 10px; height: 10px; justify-content: center; border-radius: 2px; }
.shade .seg.dark button + button { width: 10px; }
.box.grey { color: #aaa; }
.shades { color: #aaa; }
.shades .deep { background: #2b2b2b; color: #ddd; }
.info { position: relative; padding: 3px 5px; color: #fff; text-shadow: 0 0 1px #000; }
.info p { line-height: 10px; }
.gizmo { position: absolute; top: 32px; right: 4px; width: 44px; height: 44px; }
.gizmo text { font: bold 6px Roboto, sans-serif; text-anchor: middle; fill: #1b1b1b; }
.navs { position: absolute; top: 76px; right: 5px; display: flex; flex-direction: column; gap: 2px; }
.navs button { width: 14px; height: 14px; justify-content: center; border-radius: 50%; background: #2b2b2b; color: #eee; }
.edge { position: absolute; top: 34px; color: #aaa; font-size: 8px; }
.edge.l { left: 0; }
.edge.r { right: 0; }

.timeline { flex: none; background: #383838; border-radius: 3px; overflow: hidden; margin-bottom: 1px; }
.bar.tl { height: 13px; }
.pair { display: flex; }
.pop { padding: 0 1px 0 3px; gap: 3px; }
.plains { display: flex; gap: 9px; }
.play { gap: 4px; padding-right: 8px; }
.play .lit { color: #fff; }
.off button + button { color: #555; }
.trans { color: #fff; }
.trans button { width: 11px; border-right: 1px solid #464646; }
.num { height: 10px; width: 45px; padding: 0 6px; background: #545454; justify-content: space-between; }
.num input { width: 14px; text-align: right; }
.num.cur { width: 40px; text-align: center; border-radius: 2px; }
.nums { gap: 4px; }
.range { display: flex; gap: 1px; border-radius: 2px; overflow: hidden; }
.range button { width: 10px; height: 10px; justify-content: center; background: #545454; }
.ruler { position: relative; height: 25px; background: linear-gradient(#2a2a2a 13px, #333 13px); }
.frames { display: flex; height: 25px; padding: 0 16px 0 44px; background: linear-gradient(#404040, #404040) 31px 13px / calc(100% - 62px) 12px no-repeat; }
.frames li { flex: 1; font: 6px/13px "DejaVu Sans", sans-serif; text-align: center; color: #aaa; white-space: nowrap;
  background: linear-gradient(#303030, #303030) center 13px / 1px 12px no-repeat, linear-gradient(#373737, #373737) left 13px / 1px 12px no-repeat; }
.playhead { position: absolute; left: 25px; top: 2px; width: 13px; height: 9px; border-radius: 2px; background: #4f77bd; color: #fff; text-align: center; line-height: 9px; }
.playhead::after { content: ""; position: absolute; left: 6px; top: 9px; width: 1px; height: 8px; background: #5680c2; }
.scroll { position: absolute; left: 5px; right: 4px; bottom: 1px; height: 4px; border-radius: 2px; background: #676767; }

.right { display: flex; flex-direction: column; gap: 3px; width: 177px; padding: 0 1px 1px 0; }
.outliner { height: 164px; display: flex; flex-direction: column; background: #282828; border-radius: 3px; overflow: hidden; }
.bar.side { display: flex; gap: 5px; height: 13px; flex: none; background: #373737; }
.side .search { margin-left: 8px; margin-right: auto; }
.side .search.far { margin-left: 33px; }
.plain { gap: 3px; color: #ccc; }
.rows { display: flex; flex-direction: column; height: 96px; margin-top: 1px; color: #c8c8c8; }
.rows li { flex: 1; display: flex; align-items: center; gap: 3px; padding-right: 4px; }
.rows li:nth-child(even) { background: #2c2c2c; }
.rows .root { padding-left: 11px; }
.rows .c1 { padding-left: 13px; }
.rows .c2 { padding-left: 23px; }
.rows .c2::before { content: ""; width: 1px; align-self: stretch; margin: 0 5px 0 -8px; background: #555; }
.tw { width: 5px; height: 5px; flex: none; }
.sp { flex: 1; }
.nm { margin-right: 8px; }
.halo { background: #777; border-radius: 2px; }
.rows .or, .ptabs .or { color: #e0914e; }
.rows .wr { color: #7f9fd8; }
.rows .gr, .ptabs .gr { color: #14a67a; }
.rows .hid { color: #686868; }
.rows .hid .or, .rows .hid .gr { opacity: .5; }
.rows li.act { background: #3b5689; color: #ffb43c; }
.rows li.sel { background: #213d62; color: #d96f24; }
.rows .act .gr, .rows .sel .gr { color: #22c7b8; }
.act .halo { background: #7f87a4; }
.rows .tw, .rows .eye { color: #c8c8c8; }
.rows .hid .tw, .rows .hid .eye { color: #777; }
.rows input { width: 6px; height: 6px; background: #e5e5e5; border-radius: 1px; position: relative; }
.rows input::after { content: ""; position: absolute; left: 2px; top: 1px; width: 2px; height: 3px; border: solid #222; border-width: 0 1px 1px 0; transform: rotate(40deg); }
.empty { flex: 1; background: repeating-linear-gradient(#2c2c2c 0 11px, #282828 11px 21px); }

.props { flex: 1; min-height: 0; display: flex; flex-direction: column; background: #424242; border-radius: 3px; overflow: hidden; }
.body { display: flex; flex: 1; }
.ptabs { display: flex; flex-direction: column; gap: 1px; width: 15px; padding-top: 4px; background: #1f1f1f; }
.ptabs button { height: 14px; justify-content: center; background: #2b2b2b; border-radius: 2px 0 0 2px; color: #ccc; }
.ptabs .gap { margin-top: 4px; }
.ptabs .on { background: #424242; color: #71a3f0; }
.ptabs .blu { color: #5c7fb8; }
.ptabs .red { color: #c25b66; }
.panel { flex: 1; padding: 5px 4px 0 5px; }
.crumb { display: flex; align-items: center; gap: 4px; height: 10px; }
.crumb button { margin-left: auto; color: #999; }
.add { height: 9px; margin-top: 9px; padding-right: 1px; background: #2a2a2a; border-radius: 2px; }
.add select { flex: 1; padding-left: 3px; }

.status { display: flex; align-items: center; height: 10px; padding: 0 8px 0 6px; background: #2e2e2e; color: #a0a0a0; flex: none; }
.hint { display: flex; align-items: center; gap: 5px; width: 126px; white-space: nowrap; }
.ms { width: 7px; height: 8px; flex: none; }
.ms.drag { width: 9px; }
.status p { margin-left: auto; white-space: nowrap; }
```
FILE: grid.js
```js
const STEP = 9.75, CX = 428, CY = 242.5;
const lines = { minor: "", major: "" };
for (let k = -60; k <= 60; k++) {
  const kind = k % 10 === 0 ? "major" : "minor";
  const x = Math.floor(CX + k * STEP) + 0.5, y = Math.floor(CY + k * STEP) + 0.5;
  lines[kind] += `M${x} -100V600M-200 ${y}H1100`;
}
document.getElementById("grid").innerHTML =
  `<path d="${lines.minor}" stroke="#434343"/><path d="${lines.major}" stroke="#4d4d4d"/>`;
```
